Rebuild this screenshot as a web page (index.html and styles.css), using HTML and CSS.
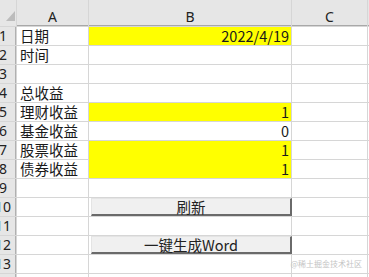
FILE: index.html
```html
<html>
<head>
<meta http-equiv="content-type" content="text/html; charset=UTF-8">
<link rel="stylesheet" href="styles.css">
</head>
<body>
<div class="sheet">
	<div class="corner"><svg width="9" height="10" viewBox="0 0 9 10"><polygon points="9,0 9,10 0,10" fill="#bcbcbc"/></svg></div>
	<div class="colhead">A</div>
	<div class="colhead">B</div>
	<div class="colhead">C</div>
	<div class="colhead"></div>

	<div class="rowhead"><span>1</span></div>
	<div class="cell">日期</div>
	<div class="cell num fill">2022/4/19</div>
	<div class="cell"></div>
	<div class="cell"></div>

	<div class="rowhead"><span>2</span></div>
	<div class="cell">时间</div>
	<div class="cell"></div>
	<div class="cell"></div>
	<div class="cell"></div>

	<div class="rowhead"><span>3</span></div>
	<div class="cell"></div>
	<div class="cell"></div>
	<div class="cell"></div>
	<div class="cell"></div>

	<div class="rowhead"><span>4</span></div>
	<div class="cell">总收益</div>
	<div class="cell"></div>
	<div class="cell"></div>
	<div class="cell"></div>

	<div class="rowhead"><span>5</span></div>
	<div class="cell">理财收益</div>
	<div class="cell num fill">1</div>
	<div class="cell"></div>
	<div class="cell"></div>

	<div class="rowhead"><span>6</span></div>
	<div class="cell">基金收益</div>
	<div class="cell num">0</div>
	<div class="cell"></div>
	<div class="cell"></div>

	<div class="rowhead"><span>7</span></div>
	<div class="cell">股票收益</div>
	<div class="cell num fill fill_down">1</div>
	<div class="cell"></div>
	<div class="cell"></div>

	<div class="rowhead"><span>8</span></div>
	<div class="cell">债券收益</div>
	<div class="cell num fill">1</div>
	<div class="cell"></div>
	<div class="cell"></div>

	<div class="rowhead"><span>9</span></div>
	<div class="cell"></div>
	<div class="cell"></div>
	<div class="cell"></div>
	<div class="cell"></div>

	<div class="rowhead"><span>10</span></div>
	<div class="cell"></div>
	<div class="cell btn_cell"><div class="sheet_btn">刷新</div></div>
	<div class="cell"></div>
	<div class="cell"></div>

	<div class="rowhead"><span>11</span></div>
	<div class="cell"></div>
	<div class="cell"></div>
	<div class="cell"></div>
	<div class="cell"></div>

	<div class="rowhead"><span>12</span></div>
	<div class="cell"></div>
	<div class="cell btn_cell"><div class="sheet_btn">一键生成Word</div></div>
	<div class="cell"></div>
	<div class="cell"></div>

	<div class="rowhead"><span>13</span></div>
	<div class="cell"></div>
	<div class="cell"></div>
	<div class="cell"></div>
	<div class="cell"></div>

	<div class="rowhead"><span>14</span></div>
	<div class="cell"></div>
	<div class="cell"></div>
	<div class="cell"></div>
	<div class="cell"></div>
</div>
<div class="watermark">@稀土掘金技术社区</div>
</body>
</html>
```

FILE: styles.css
```css
body { margin:0; overflow:hidden; background:#ffffff; font-family:"Noto Sans CJK SC", "Noto Sans", sans-serif; color:#1a1a1a; }
.sheet { display:grid; grid-template-columns:16px 71px 202px 75px 1fr; grid-template-rows:26px repeat(14, 18px); gap:1px; background:#d6d6d6; width:369px; }
.corner { background:#e6e6e6; display:flex; align-items:flex-end; justify-content:flex-end; padding:0 1px 5px 0; box-sizing:border-box; }
.colhead { background:#e6e6e6; display:flex; align-items:center; justify-content:center; padding-top:8px; box-sizing:border-box; font-family:"Noto Sans", sans-serif; font-size:14px; color:#222; border-bottom:1px solid #a8a8a8; }
.rowhead { background:#e6e6e6; display:flex; align-items:center; font-family:"Noto Sans", sans-serif; font-size:14px; color:#222; border-right:1px solid #b0b0b0; box-sizing:border-box; }
.rowhead span { width:6px; display:flex; justify-content:center; white-space:nowrap; line-height:18px; }
.cell { background:#ffffff; font-size:14.5px; line-height:18px; padding:0 3px; white-space:nowrap; overflow:visible; }
.num { text-align:right; padding:0 2px 0 0; }
.fill { background:#ffff00; }
.fill_down { box-shadow:0 1px 0 #ffff00; }
.btn_cell { padding:0; position:relative; z-index:1; }
.sheet_btn { box-sizing:border-box; width:201px; height:18px; margin-left:2px; background:#f0f0f0; border-top:1px solid #e4e4e4; border-left:1px solid #e4e4e4; border-right:2px solid #6a6a6a; border-bottom:2px solid #6a6a6a; text-align:center; font-size:14.5px; line-height:15px; color:#222; }
.watermark { position:absolute; right:7px; bottom:8px; font-size:8px; color:#c4c4c4; }
```
